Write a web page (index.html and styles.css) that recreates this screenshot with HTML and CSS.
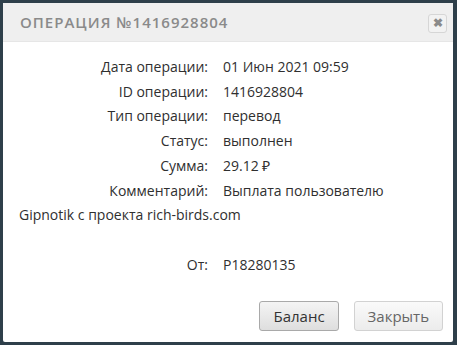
FILE: index.html
```html
<!DOCTYPE html>
<html lang="ru">
<head>
    <meta charset="UTF-8">
    <meta name="viewport" content="width=device-width, initial-scale=1.0">
    <title>Операция №1416928804</title>
    <link rel="stylesheet" href="styles.css">
</head>
<body>

    <div class="dialog">
        <div class="dialog-head">
            <h2>Операция №1416928804</h2>
            <button class="close" title="Закрыть">&#10006;</button>
        </div>

        <div class="dialog-body">
            <div class="row"><span class="label">Дата операции:</span>01 Июн 2021 09:59</div>
            <div class="row"><span class="label">ID операции:</span>1416928804</div>
            <div class="row"><span class="label">Тип операции:</span>перевод</div>
            <div class="row"><span class="label">Статус:</span>выполнен</div>
            <div class="row"><span class="label">Сумма:</span>29.12 &#8381;</div>
            <div class="row"><span class="label">Комментарий:</span>Выплата пользователю</div>
            <div class="row">Gipnotik с проекта rich-birds.com</div>
            <div class="row empty"></div>
            <div class="row"><span class="label">От:</span>P18280135</div>
        </div>

        <div class="dialog-foot">
            <button class="btn">Баланс</button>
            <button class="btn disabled">Закрыть</button>
        </div>
    </div>

</body>
</html>
```

FILE: styles.css
```css
html, body {
    margin: 0;
    height: 100%;
}
body {
    background: #2e3f4a;
    padding: 3px 4px 3px 3px;
    box-sizing: border-box;
}
.dialog {
    background: #fff;
    height: 100%;
    border-radius: 2px;
    display: flex;
    flex-direction: column;
    font-family: "Open Sans", sans-serif;
}
.dialog-head {
    background: #efefef;
    height: 38px;
    display: flex;
    align-items: center;
    justify-content: space-between;
    padding: 0 6px 0 17px;
    border-bottom: 1px solid #e6e6e6;
}
.dialog-head h2 {
    margin: 0;
    font-size: 15px;
    font-weight: 600;
    text-transform: uppercase;
    letter-spacing: 1px;
    color: #8a8a8a;
}
.close {
    width: 19px;
    height: 19px;
    padding: 0;
    margin-top: 2px;
    border: 1px solid #d6d6d6;
    border-radius: 3px;
    background: #f2f2f2;
    color: #8a8a8a;
    font-size: 12px;
    font-weight: bold;
    line-height: 17px;
}
.dialog-body {
    flex: 1;
    padding: 13px 12px 0 16px;
    font-size: 14px;
    color: #2f2f2f;
}
.row {
    line-height: 24.7px;
}
.row.empty {
    height: 24.7px;
}
.label {
    text-align: right;
    display: inline-block;
    width: 189px;
    margin-right: 15px;
    vertical-align: top;
}
.dialog-foot {
    display: flex;
    justify-content: flex-end;
    gap: 15px;
    padding: 0 10px 11px 0;
}
.btn {
    font-family: "Open Sans", sans-serif;
    font-size: 15px;
    height: 30px;
    padding: 0 13px;
    border: 1px solid #a9a9a9;
    border-radius: 3px;
    background: linear-gradient(#f4f4f4, #dedede);
    color: #333;
}
.btn.disabled {
    border-color: #d2d2d2;
    background: linear-gradient(#fafafa, #ececec);
    color: #666;
}
```
